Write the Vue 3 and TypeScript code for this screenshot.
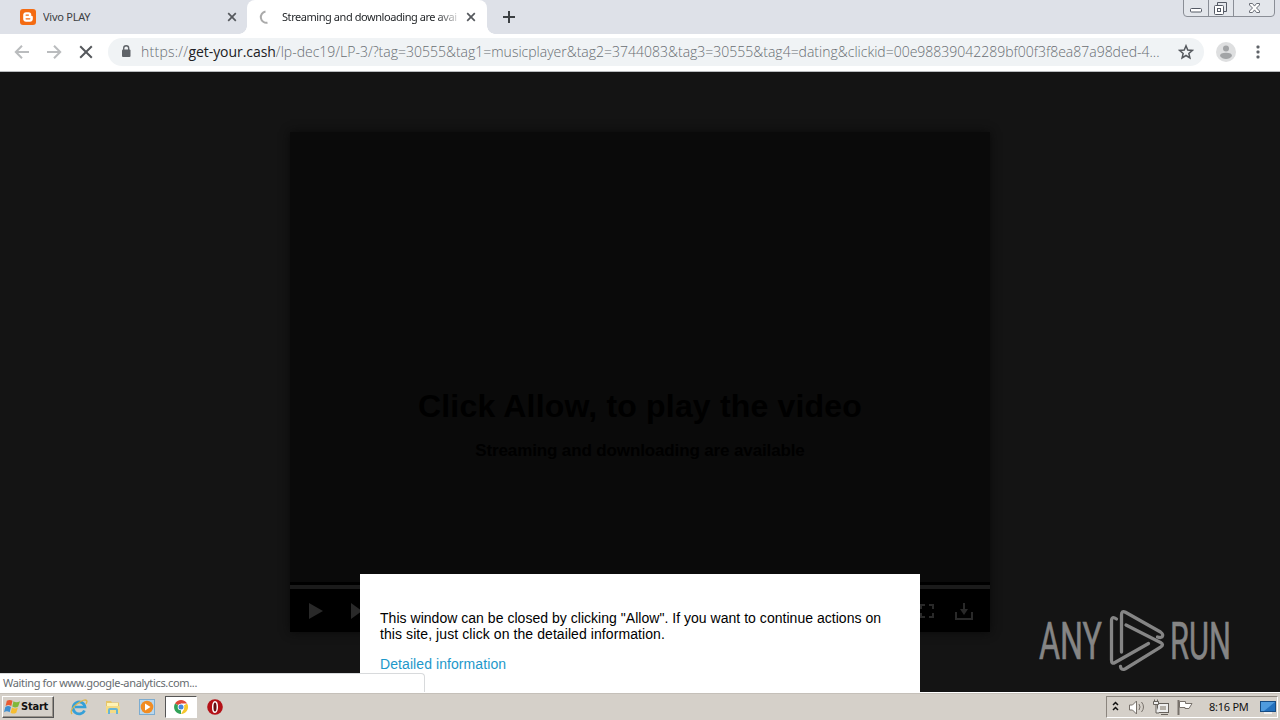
<script setup lang="ts">
interface Tab {
  title: string
  active: boolean
}

const tabs: Tab[] = [
  { title: 'Vivo PLAY', active: false },
  { title: 'Streaming and downloading are avail', active: true },
]
const url = {
  scheme: 'https://',
  host: 'get-your.cash',
  path: '/lp-dec19/LP-3/?tag=30555&tag1=musicplayer&tag2=3744083&tag3=30555&tag4=dating&clickid=00e98839042289bf00f3f8ea87a98ded-4...',
}
</script>

<template>
  <div class="screen">
    <header class="tabstrip">
      <div v-for="tab in tabs" :key="tab.title" class="tab" :class="{ active: tab.active }">
        <svg v-if="!tab.active" class="favicon" viewBox="0 0 16 16">
          <rect width="16" height="16" rx="3" fill="#f46b12" />
          <path d="M6 3.300h2.700c1.600 0 2.600 1.100 2.600 2.600 0 .9.2 1.100.8 1.100.5 0 .7.3.7.8v2.100c0 1.600-1.100 2.800-2.800 2.800H6c-1.600 0-2.800-1.200-2.800-2.800V6.100C3.200 4.500 4.400 3.300 6 3.300z" fill="#fff" />
          <path d="M6.100 6.100h2.300M6.100 9.800h3.700" stroke="#f46b12" stroke-width="1.300" stroke-linecap="round" />
        </svg>
        <svg v-else class="favicon" viewBox="0 0 16 16">
          <path d="M8.500 2.500A5.600 5.600 0 0 0 10.500 13.700" fill="none" stroke="#aaa" stroke-width="2" />
        </svg>
        <span class="tab-title">{{ tab.title }}</span>
        <svg class="tab-close" viewBox="0 0 10 10">
          <path d="M1.200 1.200l7.600 7.600M8.800 1.200L1.200 8.800" stroke="#55585d" stroke-width="1.700" />
        </svg>
      </div>
      <svg class="new-tab" viewBox="0 0 14 14">
        <path d="M7 1v12M1 7h12" stroke="#3c4043" stroke-width="2" />
      </svg>
      <svg class="window-buttons" viewBox="0 0 94 18">
        <path d="M1.500 0V13q0 3.500 3.500 3.500H89q3.500 0 3.500-3.500V0M26.500 0v16M51.500 0v16" fill="#e3e6eb" stroke="#8a8e96" />
        <rect x="8.500" y="8.500" width="11" height="3.500" rx="1" fill="#fff" stroke="#555a65" />
        <path d="M35.500 5V2.500h9v9H42" fill="none" stroke="#555a65" />
        <rect x="32.500" y="5.500" width="9" height="9" rx="1" fill="#fff" stroke="#555a65" />
        <rect x="35.500" y="8.500" width="3" height="3" fill="none" stroke="#555a65" />
        <path d="M67.500 3.500h3l2 2.600 2-2.600h3v1.500l-3 3 3 3v1.500h-3l-2-2.600-2 2.600h-3V11l3-3-3-3z" fill="#fff" stroke="#6a6e77" />
      </svg>
    </header>

    <div class="toolbar">
      <svg class="nav" viewBox="0 0 16 16"><path d="M15 8H2M8 1.800L1.800 8 8 14.200" fill="none" stroke="#babcbe" stroke-width="2" /></svg>
      <svg class="nav" viewBox="0 0 16 16"><path d="M1 8h13M8 1.800L14.200 8 8 14.200" fill="none" stroke="#babcbe" stroke-width="2" /></svg>
      <svg class="nav" viewBox="0 0 16 16"><path d="M2.200 2.200l11.600 11.600M13.800 2.200L2.200 13.800" stroke="#55585c" stroke-width="2" /></svg>
      <div class="omnibox">
        <svg class="lock" viewBox="0 0 10 13">
          <rect x="1" y="4.500" width="8.500" height="7.500" rx="1" fill="#5f6368" />
          <path d="M2.700 5V3.200a2.500 2.500 0 0 1 5 0V5" fill="none" stroke="#5f6368" stroke-width="1.400" />
        </svg>
        <span class="url"><span class="scheme">{{ url.scheme }}</span><b>{{ url.host }}</b>{{ url.path }}</span>
        <svg class="star" viewBox="0 0 16 16">
          <path d="M8 1.800l1.750 4.200 4.550.4-3.450 3 1.050 4.450L8 11.500l-3.900 2.350L5.150 9.400 1.700 6.400l4.550-.4z" fill="none" stroke="#55595e" stroke-width="1.500" />
        </svg>
      </div>
      <svg class="avatar" viewBox="0 0 20 20">
        <circle cx="10" cy="10" r="10" fill="#dedfe0" />
        <circle cx="10" cy="6.500" r="3" fill="#a2a4a6" />
        <path d="M4 14q0-3.300 6-3.300t6 3.300q-2 3-6 3t-6-3z" fill="#a2a4a6" />
      </svg>
      <svg class="dots" viewBox="0 0 4 16" fill="#5f6368">
        <rect x=".5" y="1.500" width="3" height="3" rx="1" /><rect x=".5" y="6.500" width="3" height="3" rx="1" /><rect x=".5" y="11.500" width="3" height="3" rx="1" />
      </svg>
    </div>

    <main class="page">
      <section class="player">
        <div class="video">
          <h1>Click Allow, to play the video</h1>
          <h2>Streaming and downloading are available</h2>
        </div>
        <div class="seek"></div>
        <div class="controls">
          <svg class="transport" viewBox="0 0 70 20" fill="#292929"><path d="M1 2l14 8-14 8zM43 2l11 8-11 8zM54 3h2v14h-2z" /></svg>
          <svg class="extras" viewBox="0 0 60 20" fill="none" stroke="#292929" stroke-width="2">
            <path d="M3 8V4h4M11 4h4v4M15 12v4h-4M7 16H3v-4M38 11v7h16v-7M46 2v9" />
            <path d="M42 8h8l-4 6z" fill="#292929" stroke="none" />
          </svg>
        </div>
      </section>

      <svg class="watermark" viewBox="0 0 200 72">
        <g class="brand">
          <text x="1" y="50" textLength="63" lengthAdjust="spacingAndGlyphs">ANY</text>
          <text x="132" y="50" textLength="61" lengthAdjust="spacingAndGlyphs">RUN</text>
        </g>
        <g fill="none" stroke="#858585" stroke-width="3.300" stroke-linejoin="round" stroke-linecap="round">
          <path d="M78.500 10Q73.500 6.500 73.500 12V51q0 4.500 3.500 2.500L110.500 34.500" />
          <path d="M83.500 43V6q0-5 4-2.700L122.500 23q3.500 2.500 1.500 5-1.500 1-4.500 0" />
          <path d="M88 16L122.500 33.500q4 2.300 0 4.600L87 60q-4 1.500-4.500-2.500" />
        </g>
      </svg>

      <div class="notice">
        <p><span>This window can be closed by clicking "Allow". If you want to continue actions on</span><br><span class="second">this site, just click on the detailed information.</span></p>
        <a>Detailed information</a>
      </div>
      <div class="status">Waiting for www.google-analytics.com...</div>
    </main>

    <footer class="taskbar">
      <div class="start">
        <svg viewBox="0 0 18 18">
          <path d="M3 3q3-2 6 0L7.700 8.500q-3-2-6 0z" fill="#e95b32" />
          <path d="M10 3.500q3 2 7 0L15 9q-3 2-6.200 0z" fill="#80b83b" />
          <path d="M1.400 9.500q3-2 6 0L6 15q-3-2-6 0z" fill="#3f8fd0" />
          <path d="M8.500 10q3 2 6.200 0l-1.700 5.500q-3 2-6 0z" fill="#f6bd31" />
        </svg>
        <span>Start</span>
      </div>
      <div class="task">
        <svg viewBox="0 0 18 18">
          <path d="M14.500 12.500A6 6 0 1 1 15 9H5" fill="none" stroke="#35a0d8" stroke-width="2.700" />
          <path d="M2 16Q-1 12 7 6t10-3q0 1-1 3" fill="none" stroke="#ddb64c" stroke-width="1.300" />
        </svg>
      </div>
      <div class="task">
        <svg viewBox="0 0 18 18">
          <path d="M2 3h5l1 1.500h7V15H2z" fill="#e6c568" /><path d="M3 5h11v5H3z" fill="#fff3b5" />
          <path d="M2 8h14v7H2z" fill="#f4db85" /><path d="M5 16v-4q0-1 1-1h6q1 0 1 1v4" fill="none" stroke="#67b5d5" stroke-width="2" />
        </svg>
      </div>
      <div class="task">
        <svg viewBox="0 0 18 18">
          <rect x="1.500" y="1.500" width="15" height="15" fill="#b9d7ed" stroke="#7cacd0" />
          <circle cx="9" cy="9" r="6.300" fill="#f18c22" /><path d="M7 5.500l5.500 3.500L7 12.500z" fill="#fff" />
        </svg>
      </div>
      <div class="task pressed">
        <svg viewBox="0 0 18 18">
          <path d="M9 9L3 5.500A7 7 0 0 1 15.100 5.500H9z" fill="#df4939" />
          <path d="M9 9l6.100-3.500A7 7 0 0 1 9 16l3-5z" fill="#f6c72c" />
          <path d="M9 9v3.500L9 16A7 7 0 0 1 3 5.500z" fill="#31a258" />
          <circle cx="9" cy="9" r="3.300" fill="#fff" /><circle cx="9" cy="9" r="2.500" fill="#4487dd" />
        </svg>
      </div>
      <div class="task">
        <svg viewBox="0 0 18 18">
          <circle cx="9" cy="9" r="7.800" fill="#b41117" /><ellipse cx="9" cy="9" rx="2.300" ry="5.300" fill="#651014" stroke="#fff" stroke-width="1.500" />
        </svg>
      </div>
      <div class="tray">
        <svg class="tray-icons" viewBox="0 0 90 20" fill="none">
          <path d="M6 8l2.500-2.500L11 8M6 13l2.500-2.500L11 13" stroke="#111" stroke-width="1.500" />
          <path d="M22.500 8h3l4-4v13l-4-4h-3z" fill="#fff" stroke="#77716b" />
          <path d="M32 7q2 3 0 6M34.500 5q4 5 0 10" stroke="#77716b" />
          <rect x="50.500" y="6.500" width="11" height="9" fill="#eee" stroke="#67625c" /><rect x="53" y="9" width="6" height="4" fill="#b5b0a8" />
          <path d="M46.500 4.500h5v3h-5zM47.500 2.500v2M50.500 2.500v2M49 8v8h3M54 17.500h7" fill="#eee" stroke="#67625c" />
          <path d="M71.500 3v15" stroke="#77716b" stroke-width="2" />
          <path d="M72.500 4.500h6v2h6.500L82 11.500h-4v-1h-5.500z" fill="#fff" stroke="#77716b" />
        </svg>
        <span class="clock">8:16 PM</span>
        <svg class="desktop" viewBox="0 0 16 14">
          <rect x=".5" y="1.500" width="15" height="10" fill="#2370bd" stroke="#164b83" /><path d="M1 2h14L4 11H1z" fill="#509bdd" /><path d="M4 13h8" stroke="#f8f8f8" stroke-width="1.500" />
        </svg>
      </div>
    </footer>
  </div>
</template>

<style>
body { margin: 0; overflow: hidden; }
</style>

<style scoped>
* { box-sizing: border-box; }
.screen { width: 1280px; height: 720px; display: flex; flex-direction: column; overflow: hidden; background: #141414; font-family: "Liberation Sans", Arial, sans-serif; }
svg { display: block; flex: none; }
.tabstrip { flex: 0 0 34px; display: flex; align-items: flex-start; background: #dee1e8; }
.tab { position: relative; display: flex; align-items: center; height: 34px; width: 247px; padding-left: 20px; font: 11px/34px "Noto Sans", sans-serif; color: #3c4043; }
.tab.active { width: 240px; padding-left: 10px; background: #fff; border-radius: 8px 8px 0 0; }
.tab.active::before, .tab.active::after { content: ""; position: absolute; bottom: 0; width: 8px; height: 8px; }
.tab.active::before { left: -8px; background: radial-gradient(circle at 0 0, #dee1e8 7.5px, #fff 8px); }
.tab.active::after { right: -8px; background: radial-gradient(circle at 100% 0, #dee1e8 7.5px, #fff 8px); }
.favicon { width: 16px; height: 16px; }
.tab-title { margin-left: 7px; width: 175px; white-space: nowrap; overflow: hidden; letter-spacing: -.25px; }
.active .tab-title { margin-left: 9px; color: #25282b; letter-spacing: -.44px; -webkit-mask-image: linear-gradient(90deg, #000 155px, transparent 180px); mask-image: linear-gradient(90deg, #000 155px, transparent 180px); }
.tab-close { width: 10px; height: 10px; margin-left: 9px; }
.new-tab { width: 14px; height: 14px; margin: 10px 0 0 15px; }
.window-buttons { width: 94px; height: 18px; margin-left: auto; margin-right: 4px; }
.toolbar { flex: 0 0 38px; display: flex; align-items: center; padding: 0 20px 2px 14px; background: #fff; border-bottom: 1px solid #b9bbbe; }
.nav { width: 16px; height: 16px; margin-right: 16px; }
.omnibox { display: flex; align-items: center; width: 1096px; height: 28px; margin-left: -2px; padding: 0 10px 0 13px; border-radius: 14px; background: #f0f3f5; }
.lock { width: 10px; height: 13px; }
.url { width: 1020px; margin-left: 10px; font: 300 14px/26px "Open Sans", "Noto Sans", sans-serif; color: #686d72; white-space: nowrap; overflow: hidden; }
.scheme { letter-spacing: .25px; }
.url b { font-weight: 400; color: #202124; letter-spacing: -.05px; }
.star { width: 16px; height: 16px; margin-left: 17px; }
.avatar { width: 20px; height: 20px; margin-left: 12px; }
.dots { width: 4px; height: 16px; margin-left: auto; }
.page { position: relative; flex: 1; min-height: 0; padding-top: 60px; background: #141414; overflow: hidden; }
.player { width: 700px; height: 500px; margin: 0 auto; background: #000; box-shadow: 0 0 9px #0a0a0a; }
.video { height: 450px; padding-top: 254px; background: #0a0a0a; text-align: center; color: #000; }
h1 { margin: 0; font-size: 32px; line-height: 40px; letter-spacing: .18px; }
h2 { margin: 15px 0 0; font-size: 17px; line-height: 20px; letter-spacing: -.13px; }
.seek { height: 7px; border-top: 3px solid #000; background: #1b1b1b; }
.controls { display: flex; justify-content: space-between; padding: 12px 12px 0 18px; }
.transport { width: 70px; height: 20px; }
.extras { width: 60px; height: 20px; }
.watermark { position: absolute; left: 1038px; top: 537px; width: 200px; height: 72px; }
.brand { font: 51px "Roboto", sans-serif; fill: #858585; stroke: #858585; stroke-width: .6px; }
.notice { position: absolute; left: 360px; top: 502px; width: 560px; height: 118px; padding: 36px 20px 0; background: #fff; font-size: 14px; line-height: 16px; letter-spacing: .03px; color: #000; }
.notice p { margin: 0 0 14px; white-space: nowrap; }
.notice .second { letter-spacing: .08px; }
.notice a { color: #1d98ca; letter-spacing: .08px; }
.status { position: absolute; left: 0; bottom: 0; width: 425px; height: 19px; padding-left: 3px; background: #fff; border: 1px solid #d8dadc; border-left: 0; border-bottom: 0; border-radius: 0 4px 0 0; font: 11px/18px "Noto Sans", sans-serif; letter-spacing: -.33px; color: #666b70; }
.taskbar { flex: 0 0 28px; display: flex; align-items: center; padding: 0 2px; background: #d5d0c9; border-top: 1px solid #fff; box-shadow: inset 0 1px #c5c0b9; }
.start { display: flex; align-items: center; width: 52px; height: 22px; margin-right: 9px; padding-left: 1px; border: 1px solid; border-color: #fff #555 #555 #fff; box-shadow: inset -1px -1px #99938b; font: bold 11px/20px "DejaVu Sans Condensed", "DejaVu Sans", sans-serif; color: #111; letter-spacing: -.2px; }
.start svg { width: 17px; height: 17px; }
.task { display: flex; align-items: center; justify-content: center; width: 32px; height: 22px; margin-right: 2px; }
.task svg { width: 18px; height: 18px; }
.task.pressed { background: #fff; border: 1px solid; border-color: #555 #fff #fff #555; }
.tray { display: flex; align-items: center; width: 172px; height: 22px; margin-left: auto; border: 1px solid; border-color: #8b857e #fff #fff #8b857e; }
.tray-icons { width: 90px; height: 20px; }
.clock { width: 40px; margin-left: 12px; font: 11px/20px "Noto Sans", sans-serif; letter-spacing: -.25px; white-space: nowrap; color: #111; }
.desktop { width: 16px; height: 14px; margin-left: 11px; }
</style>
